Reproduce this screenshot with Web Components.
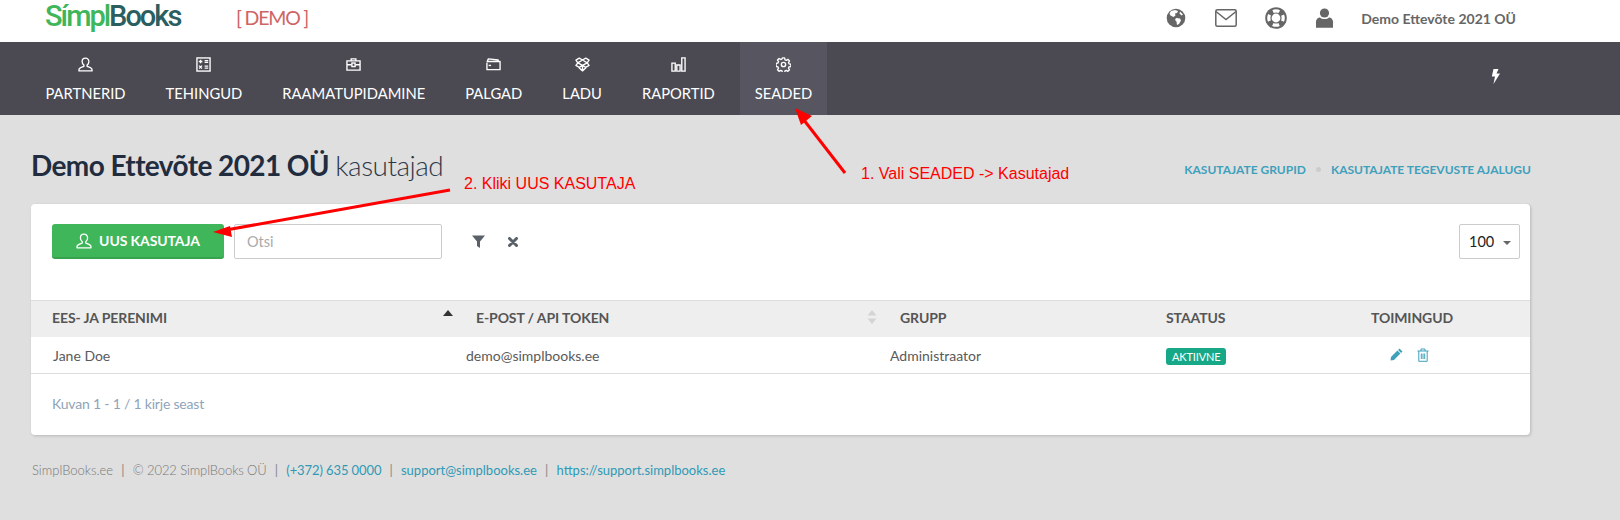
<!DOCTYPE html>
<html>
<head>
<meta charset="utf-8">
<title>SimplBooks</title>
<style>
    html, body { margin: 0; padding: 0; }
    body { background: #dfdfdf; font-family: Lato, "Liberation Sans", sans-serif; width: 1620px; height: 520px; overflow: hidden; position: relative; }
</style>
</head>
<body>
<sb-topbar></sb-topbar>
<sb-nav></sb-nav>
<sb-title></sb-title>
<sb-card></sb-card>
<sb-footer></sb-footer>
<sb-notes></sb-notes>

<script>
const ICONS = {
    user: '<path d="M8 1.2c-2.2 0-3.6 1.7-3.6 3.7 0 1.6.8 3 1.9 3.8v1.2c-1.7.7-4.3 1.5-5 2.7-.3.6-.3 1.4-.3 2.2h14c0-.8 0-1.6-.3-2.2-.7-1.2-3.3-2-5-2.7V8.7c1.1-.8 1.9-2.2 1.9-3.8 0-2-1.4-3.700-3.6-3.700z" fill="none" stroke="currentColor" stroke-width="1.3" stroke-linejoin="round"/>',
    calc: '<rect x="1" y="1" width="14" height="14" fill="none" stroke="currentColor" stroke-width="1.3"/><path d="M3 4.800h3.800M4.900 2.900v3.800M9.200 3.800h3.800M9.200 5.800h3.800M3.300 9.200l3.100 3.100M6.400 9.200l-3.100 3.100M9.200 9.700h3.800M9.200 11.800h3.800" stroke="currentColor" stroke-width="1.2" fill="none"/>',
    case: '<path d="M5.500 4V2h5v2M1 4.200h14V14H1zM1 8.300h5M10 8.300h5" fill="none" stroke="currentColor" stroke-width="1.3"/><rect x="6.300" y="6.400" width="3.400" height="3.800" fill="none" stroke="currentColor" stroke-width="1.2"/>',
    wallet: '<path d="M1 6V13.500h14V4.800H1.500M1 5.500L2.500 2l10.500 1.200v1.600" fill="none" stroke="currentColor" stroke-width="1.3" stroke-linejoin="round"/><path d="M2.800 9h2.600" stroke="currentColor" stroke-width="1.2"/>',
    box: '<path d="M4.500 1.200L8 3.200 11.500 1.200 15 3.400 13 6.200 15 9 11.500 11 8 9 4.500 11 1 9 3 6.200 1 3.400zM3 6.200L8 3.200 13 6.200 8 9zM4.300 11.500L8 14.800 11.700 11.500M8 9v5.800" fill="none" stroke="currentColor" stroke-width="1.4" stroke-linejoin="round"/>',
    bars: '<path d="M1 6.500h3.500V15H1zM6.200 8.500h3.500V15H6.200zM11.500 1H15v14h-3.500z" fill="none" stroke="currentColor" stroke-width="1.3"/>',
    gear: '<circle cx="8" cy="8" r="2.300" fill="none" stroke="currentColor" stroke-width="1.4"/><path d="M6.800 1h2.400l.4 2 1.400.6 1.700-1.100 1.700 1.700-1.100 1.700.6 1.400 2 .4v2.400l-2 .4-.6 1.400 1.100 1.700-1.700 1.700-1.700-1.100-1.400.6-.4 2H6.800l-.4-2-1.400-.6-1.700 1.100-1.700-1.700 1.100-1.700-.6-1.400-2-.4V6.800l2-.4.6-1.400-1.100-1.700 1.700-1.700L5 2.700l1.400-.6z" fill="none" stroke="currentColor" stroke-width="1.3" stroke-linejoin="round"/>'
};

const svg = (name, size) => `<svg width="${size}" height="${size}" viewBox="0 0 16 16">${ICONS[name]}</svg>`;

class SbTopbar extends HTMLElement {
    constructor() {
        super();
        this.attachShadow({ mode: 'open' });
    }

    connectedCallback() {
        this.shadowRoot.innerHTML = `
        <style>
            :host { display: flex; align-items: flex-start; height: 42px; background: #fff; color: #666; }
            .logo { margin-left: 45px; width: 191px; height: 36px; font: 500 29px/33px Roboto, sans-serif; letter-spacing: -2px; white-space: nowrap; }
            .logo b { font-weight: 500; color: #3fb65a; }
            .logo i { font-style: normal; color: #2b5f5f; }
            .demo { font-size: 19.5px; line-height: 36px; color: #cf6464; letter-spacing: -1.2px; }
            .tools { margin-left: auto; display: flex; align-items: center; height: 36px; margin-right: 104px; }
            .tools svg { display: block; }
            .name { font-size: 14px; font-weight: 700; margin-left: 28px; color: #666; }
        </style>
        <div class="logo"><b>Símpl</b><i>Books</i></div>
        <div class="demo">[ DEMO ]</div>
        <div class="tools">
            <svg width="20" height="20" viewBox="0 0 20 20" style="margin-right:29px"><circle cx="10" cy="10" r="9.300" fill="#666"/><path d="M5 3l4-1 3 1-1 2-2 .5.5 2-2 1.500-3-1.500-1-2zM10 10l4 .5 1 2-2 3.500-2 1-.5-3.500-1.500-1.500zM14 3.500l3 3-1.500 1-2-2z" fill="#fff"/></svg>
            <svg width="22" height="18" viewBox="0 0 22 18" style="margin-right:28px"><rect x=".8" y=".8" width="20.400" height="16.400" rx="1.500" fill="none" stroke="#666" stroke-width="1.500"/><path d="M1 2.500l10 8 10-8" fill="none" stroke="#666" stroke-width="1.500"/></svg>
            <svg width="22" height="22" viewBox="0 0 22 22" style="margin-right:29px"><circle cx="11" cy="11" r="10.800" fill="#666"/><circle cx="11" cy="11" r="7.200" fill="none" stroke="#fff" stroke-width="3.200" stroke-dasharray="6.500 4.800" stroke-dashoffset="3.250"/><circle cx="11" cy="11" r="4.400" fill="#fff"/></svg>
            <svg width="17" height="20" viewBox="0 0 17 20"><circle cx="8.500" cy="5" r="4.600" fill="#666"/><path d="M0 19.800v-6c0-2.800 2.500-4.300 4-4.300 1 1 2.700 1.600 4.500 1.600s3.500-.6 4.500-1.600c1.500 0 4 1.500 4 4.300v6z" fill="#666"/></svg>
            <span class="name">Demo Ettevõte 2021 OÜ</span>
        </div>
        `;
    }
}

class SbNavItem extends HTMLElement {
    constructor() {
        super();
        this.attachShadow({ mode: 'open' });
    }

    connectedCallback() {
        const active = this.hasAttribute('active');
        this.shadowRoot.innerHTML = `
        <style>
            :host { display: flex; flex-direction: column; align-items: center; padding: 15px 14.5px 0; background: ${active ? '#565560' : 'transparent'}; color: #fff; }
            svg { display: block; }
            svg * { stroke-width: 1.45; }
            .label { margin-top: 10px; font-size: 14.75px; line-height: 22px; white-space: nowrap; }
        </style>
        ${svg(this.getAttribute('icon'), 15)}
        <div class="label"><slot></slot></div>
        `;
    }
}

class SbNav extends HTMLElement {
    constructor() {
        super();
        this.attachShadow({ mode: 'open' });
    }

    connectedCallback() {
        this.shadowRoot.innerHTML = `
        <style>
            :host { display: flex; gap: 11px; height: 73px; padding-left: 31px; background: #4b4a53; box-sizing: border-box; }
            .bolt { margin-left: auto; margin-right: 120px; align-self: center; margin-bottom: 5px; }
            .bolt svg { display: block; }
        </style>
        <sb-nav-item icon="user">PARTNERID</sb-nav-item>
        <sb-nav-item icon="calc">TEHINGUD</sb-nav-item>
        <sb-nav-item icon="case">RAAMATUPIDAMINE</sb-nav-item>
        <sb-nav-item icon="wallet">PALGAD</sb-nav-item>
        <sb-nav-item icon="box">LADU</sb-nav-item>
        <sb-nav-item icon="bars">RAPORTID</sb-nav-item>
        <sb-nav-item icon="gear" active>SEADED</sb-nav-item>
        <div class="bolt"><svg width="9" height="15" viewBox="0 0 9 15"><path d="M2.500 0h5L5.500 4.500H9L2.500 15l1.500-7.500H.8z" fill="#fff"/></svg></div>
        `;
    }
}

class SbTitle extends HTMLElement {
    constructor() {
        super();
        this.attachShadow({ mode: 'open' });
    }

    connectedCallback() {
        this.shadowRoot.innerHTML = `
        <style>
            :host { display: flex; justify-content: space-between; align-items: flex-start; height: 89px; padding: 33px 89px 0 31px; box-sizing: border-box; }
            h1 { margin: 0; font-size: 28px; line-height: 34px; font-weight: 700; color: #212c3f; letter-spacing: -.6px; }
            h1 span { font-weight: 300; color: #2e3849; letter-spacing: -.5px; }
            .links { display: flex; align-items: center; margin-top: 14px; font-size: 12px; font-weight: 700; color: #3fa0bb; }
            .dot { width: 5px; height: 5px; border-radius: 50%; background: #ccc; margin: 0 10px; }
        </style>
        <h1>Demo Ettevõte 2021 OÜ <span>kasutajad</span></h1>
        <div class="links"><span>KASUTAJATE GRUPID</span><i class="dot"></i><span>KASUTAJATE TEGEVUSTE AJALUGU</span></div>
        `;
    }
}

class SbBadge extends HTMLElement {
    constructor() {
        super();
        this.attachShadow({ mode: 'open' });
        this.shadowRoot.innerHTML = `
        <style>
            :host { display: inline-block; background: #17a887; color: #fff; font-size: 11px; line-height: 17px; padding: 0 6px; border-radius: 3px; letter-spacing: -.15px; margin-top: 2px; }
        </style>
        <slot></slot>
        `;
    }
}

class SbCard extends HTMLElement {
    constructor() {
        super();
        this.attachShadow({ mode: 'open' });
    }

    connectedCallback() {
        this.shadowRoot.innerHTML = `
        <style>
            :host { display: block; margin-left: 31px; width: 1499px; height: 231px; background: #fff; border-radius: 4px; box-shadow: 1px 1px 3px rgba(0,0,0,.18); color: #555; }
            .tools { display: flex; align-items: flex-start; height: 96px; padding: 20px 10px 0 21px; box-sizing: border-box; }
            .btn { display: flex; align-items: center; justify-content: center; gap: 7px; width: 172px; height: 35px; background: #3fb65a; border-bottom: 2px solid #38a34f; box-sizing: border-box; border-radius: 3px; color: #fff; font-size: 14px; font-weight: 700; letter-spacing: -.1px; }
            .btn svg { display: block; }
            .search { width: 208px; height: 35px; box-sizing: border-box; margin-left: 10px; border: 1px solid #ccc; border-radius: 2px; padding: 0 12px; font-size: 14.5px; line-height: 33px; color: #aaa; }
            .icons { display: flex; align-items: center; height: 35px; margin-left: 30px; gap: 23px; }
            .icons svg { display: block; }
            .size { margin-left: auto; width: 61px; height: 35px; box-sizing: border-box; border: 1px solid #ccc; border-radius: 2px; display: flex; align-items: center; justify-content: space-between; padding: 0 8px 0 9px; font-size: 14.5px; color: #222; }
            .caret { width: 0; height: 0; border: 4px solid transparent; border-top: 4px solid #666; border-bottom: 0; margin-top: 2px; }
            .grid { display: grid; grid-template-columns: 435px 424px 276px 205px 1fr; }
            .head { height: 37px; background: #eee; border-top: 1px solid #ddd; box-sizing: border-box; padding-bottom: 4px; display: flex; align-items: center; font-size: 14px; font-weight: 700; letter-spacing: -.1px; color: #555; position: relative; }
            .cell { height: 37px; border-bottom: 1px solid #ddd; box-sizing: border-box; display: flex; align-items: center; font-size: 14px; color: #5a5a5a; }
            .in { padding-left: 10px; }
            .first { padding-left: 21px; }
            .first.cell { padding-left: 22px; }
            .acts { width: 60px; margin-left: 8px; display: flex; justify-content: center; gap: 14px; }
            .acts svg { display: block; }
            .sort { position: absolute; right: 13px; top: 9px; }
            .sort svg { display: block; }
            .info { padding: 20px 21px 0; font-size: 14px; line-height: 20px; letter-spacing: -.2px; color: #8fa4b8; }
        </style>
        <div class="tools">
            <div class="btn"><svg width="16" height="16" viewBox="0 0 16 16" color="#fff">${ICONS.user}</svg><span>UUS KASUTAJA</span></div>
            <div class="search">Otsi</div>
            <div class="icons">
                <svg width="13" height="13" viewBox="0 0 13 13"><path d="M0 .5h13L8 6.500V13L5 11V6.500z" fill="#5a6068"/></svg>
                <svg width="10" height="10" viewBox="0 0 10 10"><path d="M1.500 1.500l7 7M8.500 1.500l-7 7" stroke="#5a6068" stroke-width="3" stroke-linecap="round"/></svg>
            </div>
            <div class="size">100<i class="caret"></i></div>
        </div>
        <div class="grid">
            <div class="head first">EES- JA PERENIMI<span class="sort"><svg width="10" height="6" viewBox="0 0 10 6"><path d="M5 0l5 6H0z" fill="#333"/></svg></span></div>
            <div class="head in">E-POST / API TOKEN<span class="sort"><svg width="10" height="14" viewBox="0 0 10 14"><path d="M5 0l4.500 5.500H.5zM5 14L.5 8.500h9z" fill="#d4d4d4"/></svg></span></div>
            <div class="head in">GRUPP</div>
            <div class="head">STAATUS</div>
            <div class="head">TOIMINGUD</div>
            <div class="cell first">Jane Doe</div>
            <div class="cell">demo@simplbooks.ee</div>
            <div class="cell">Administraator</div>
            <div class="cell"><sb-badge>AKTIIVNE</sb-badge></div>
            <div class="cell"><div class="acts">
                <svg width="13" height="13" viewBox="0 0 13 13"><path d="M9.500.5l3 3-1.400 1.400-3-3zM7.400 2.600l3 3L4 12 .5 12.500 1 9z" fill="#3fa0bb"/></svg>
                <svg width="12" height="14" viewBox="0 0 12 14"><path d="M.5 3h11M4 3V1h4v2M1.800 3v10.300h8.400V3M4.300 5.500v5.500M6 5.500v5.500M7.700 5.500v5.500" fill="none" stroke="#3fa0bb" stroke-width="1"/></svg>
            </div></div>
        </div>
        <div class="info">Kuvan 1 - 1 / 1 kirje seast</div>
        `;
    }
}

class SbFooter extends HTMLElement {
    constructor() {
        super();
        this.attachShadow({ mode: 'open' });
    }

    connectedCallback() {
        this.shadowRoot.innerHTML = `
        <style>
            :host { display: flex; margin: 26px 0 0 32px; font-size: 13px; font-weight: 300; line-height: 18px; color: #777; white-space: nowrap; }
            a { color: #2f9ab5; font-weight: 400; text-decoration: none; }
            i { font-style: normal; font-weight: 400; margin: 0 8.2px; color: #888; }
            .tight { letter-spacing: -.1px; }
        </style>
        <span>SimplBooks.ee</span><i>|</i><span class="tight">© 2022 SimplBooks OÜ</span><i>|</i><a class="tight">(+372) 635 0000</a><i>|</i><a>support@simplbooks.ee</a><i>|</i><a>https://support.simplbooks.ee</a>
        `;
    }
}

// the red marks drawn on top of the screenshot
class SbNotes extends HTMLElement {
    constructor() {
        super();
        this.attachShadow({ mode: 'open' });
    }

    connectedCallback() {
        this.shadowRoot.innerHTML = `
        <style>
            :host { position: absolute; left: 0; top: 0; width: 1620px; height: 520px; pointer-events: none; font: 16px/18px "Liberation Sans", sans-serif; color: #f00; }
            svg { position: absolute; left: 0; top: 0; }
            span { position: absolute; white-space: nowrap; }
        </style>
        <svg width="1620" height="520" viewBox="0 0 1620 520">
            <path d="M845 173L800 115" stroke="#f00" stroke-width="3" fill="none"/>
            <path d="M795 108l17 8-11 9z" fill="#f00"/>
            <path d="M450 190L226 230" stroke="#f00" stroke-width="3" fill="none"/>
            <path d="M213 232l17-6 2 11z" fill="#f00"/>
        </svg>
        <span style="left:861px;top:165px">1. Vali SEADED -&gt; Kasutajad</span>
        <span style="left:464px;top:175px">2. Kliki UUS KASUTAJA</span>
        `;
    }
}

customElements.define('sb-topbar', SbTopbar);
customElements.define('sb-nav-item', SbNavItem);
customElements.define('sb-nav', SbNav);
customElements.define('sb-title', SbTitle);
customElements.define('sb-badge', SbBadge);
customElements.define('sb-card', SbCard);
customElements.define('sb-footer', SbFooter);
customElements.define('sb-notes', SbNotes);
</script>
</body>
</html>
